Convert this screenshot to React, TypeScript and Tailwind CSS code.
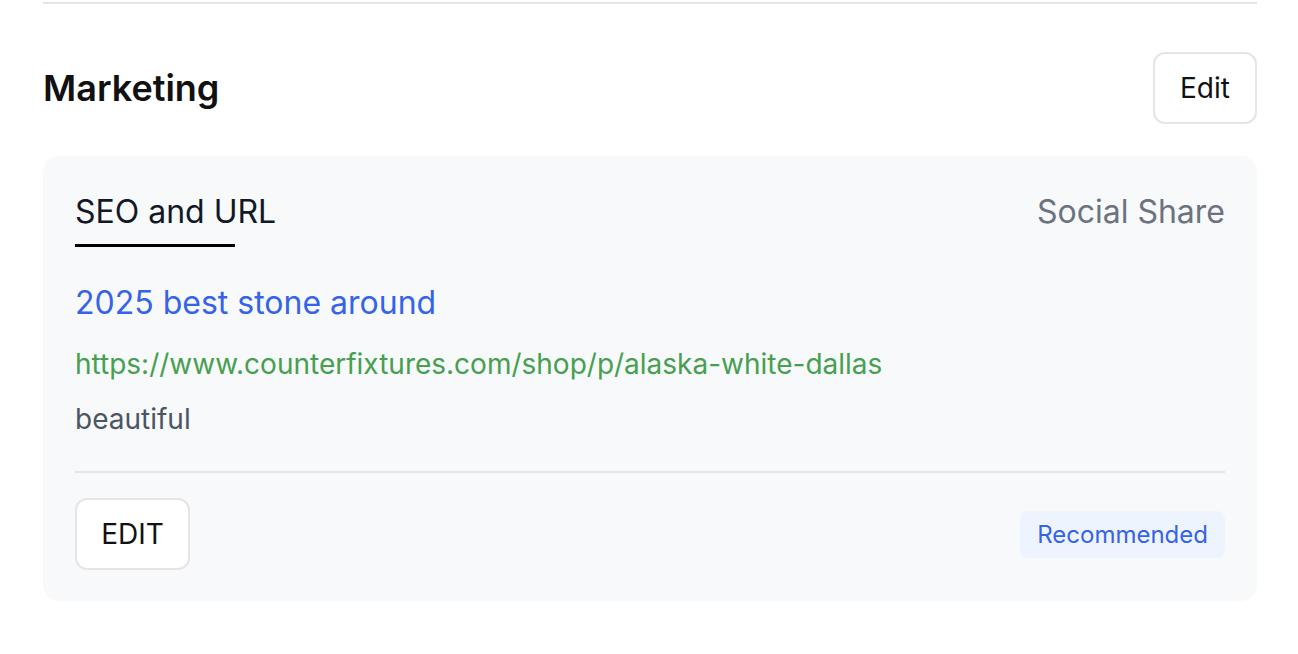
import React from "react";

function Marketing() {
  return (
    <div className="bg-white min-h-screen pl-[43px] pr-[41px]" style={{ fontFamily: "Inter, sans-serif" }}>
      <hr className="border-t-2 border-[#e5e5e5] mt-[2px]" />

      <div className="flex items-center justify-between mt-[48px]">
        <h2 className="text-[36px] font-semibold text-[#111111]">Marketing</h2>
        <button className="h-[72px] w-[104px] rounded-[12px] border-2 border-[#e5e5e5] bg-white text-[28px] text-[#111111]">
          Edit
        </button>
      </div>

      <div className="mt-[32px] rounded-[16px] bg-[#f8f9fb] px-[32px] pt-[32px] pb-[31px]">
        <div className="flex items-start justify-between">
          <div className="flex flex-col">
            <span className="text-[32px] leading-[48px] text-[#111827] pb-[8px]">SEO and URL</span>
            <div className="h-[3px] w-[160px] bg-black" />
          </div>
          <span className="text-[32px] leading-[48px] text-[#6b7280]">Social Share</span>
        </div>

        <div className="mt-[32px] flex flex-col">
          <span className="text-[32px] leading-[48px] text-[#3563e9]">2025 best stone around</span>
          <span className="mt-[19px] text-[28px] leading-[36px] text-[#46a04f]">
            https://www.counterfixtures.com/shop/p/alaska-white-dallas
          </span>
          <span className="mt-[19px] text-[28px] leading-[36px] text-[#4b5563]">beautiful</span>
        </div>

        <hr className="mt-[34px] border-t-2 border-[#e5e5e5]" />

        <div className="mt-[25px] flex items-center justify-between">
          <button className="h-[72px] w-[115px] rounded-[12px] border-2 border-[#e5e5e5] bg-white text-[28px] text-[#111111]">
            EDIT
          </button>
          <span className="rounded-[8px] bg-[#eef4fe] px-[17px] py-[8px] text-[24px] leading-[31px] text-[#3563e9]">
            Recommended
          </span>
        </div>
      </div>
    </div>
  );
}

export default function App() {
  return <Marketing />;
}
